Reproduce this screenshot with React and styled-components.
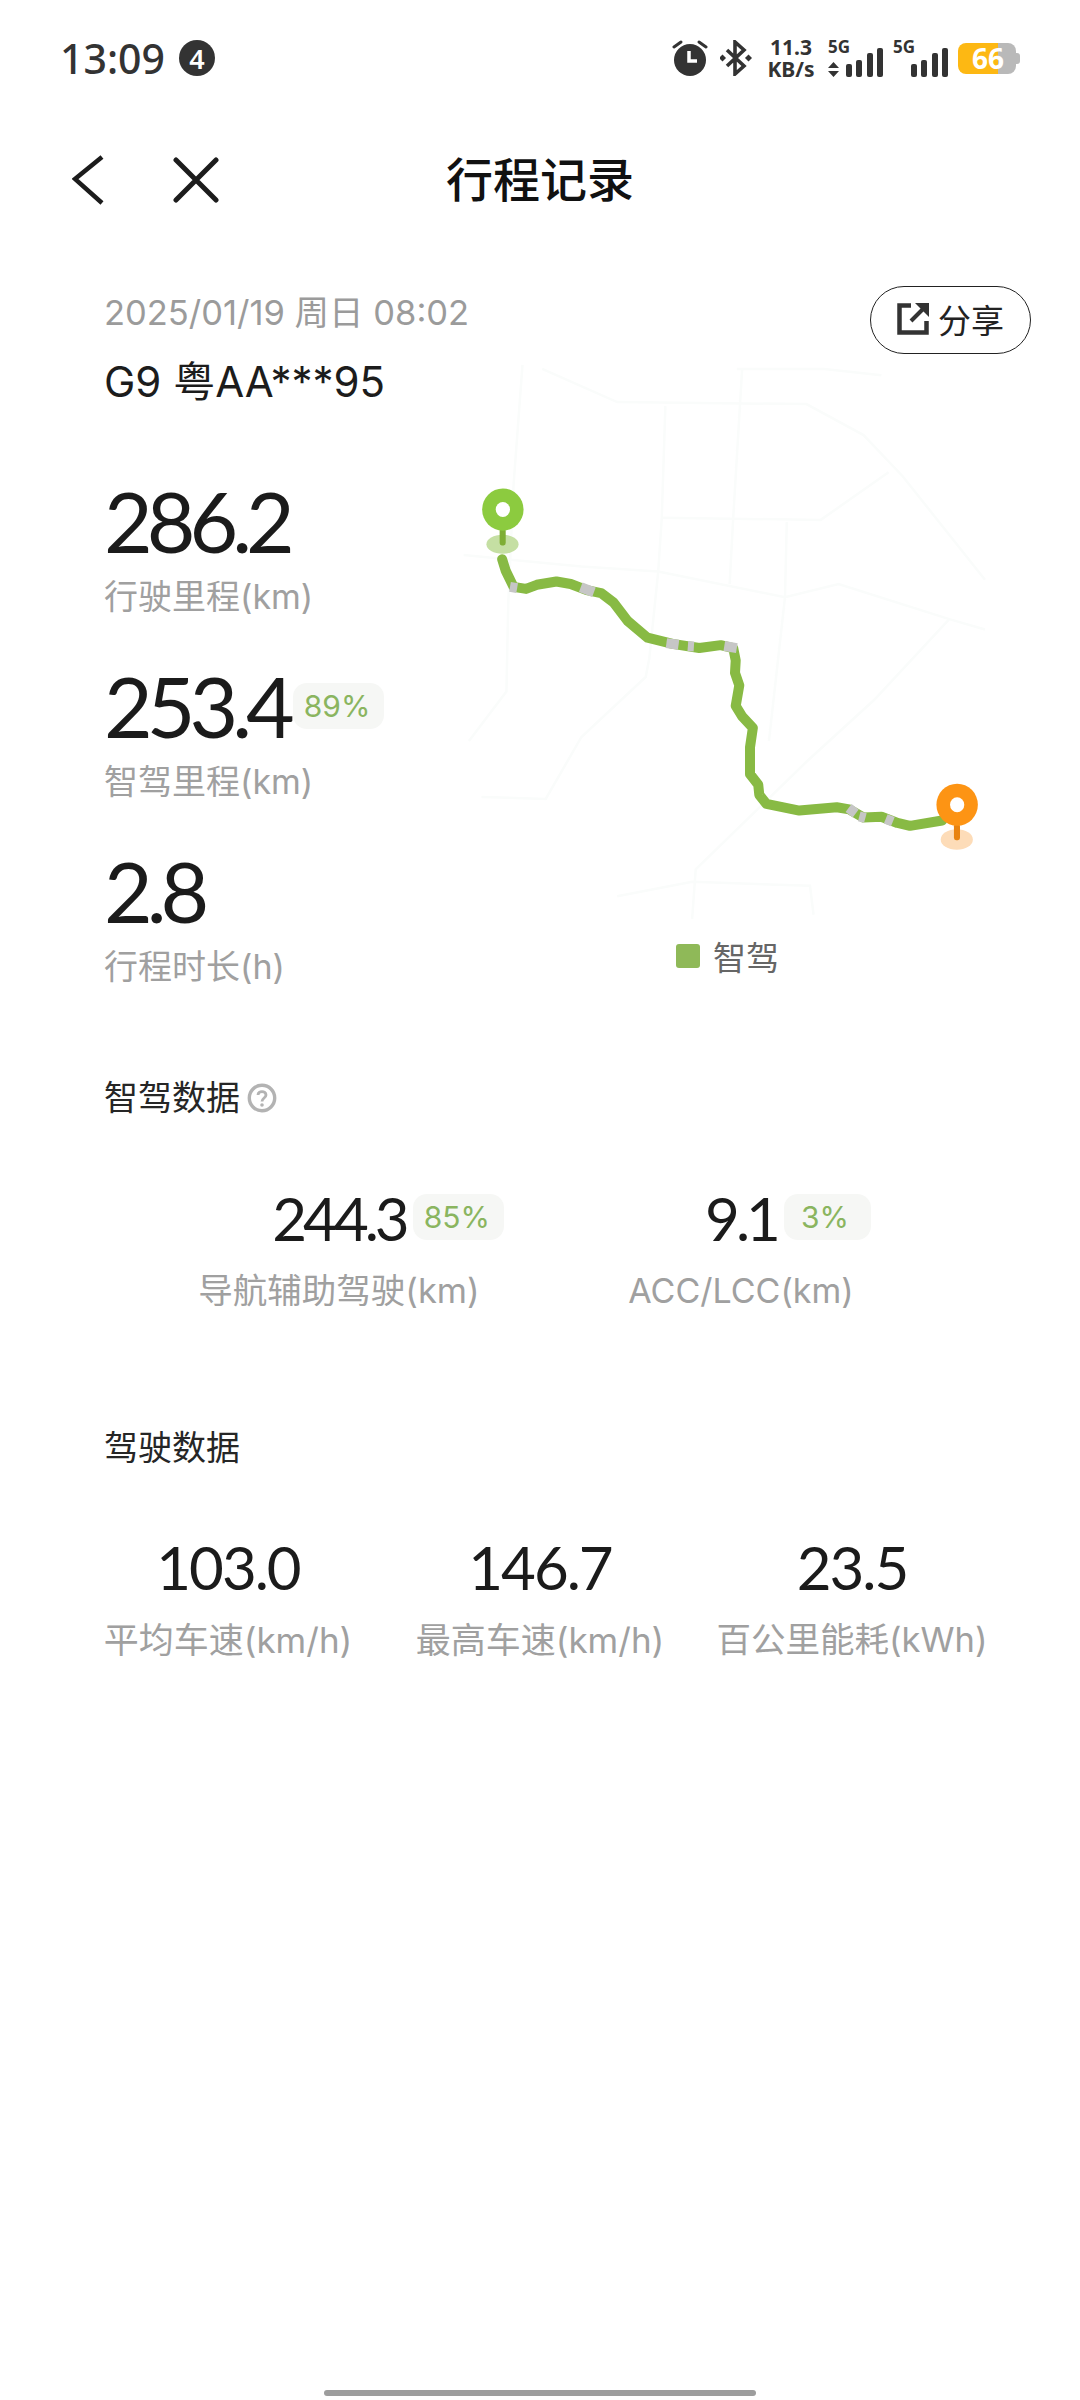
import React from 'react';
import styled, { createGlobalStyle } from 'styled-components';

const GlobalStyle = createGlobalStyle`
    html, body {
        margin: 0;
        padding: 0;
        background: #fff;
    }
    body {
        font-family: "Inter", "Noto Sans CJK SC", sans-serif;
    }
`;

const Page = styled.div`
    width: 1080px;
    height: 2400px;
    display: flex;
    flex-direction: column;
    background: #fff;
    overflow: hidden;
`;

/* status bar */
const StatusBar = styled.div`
    height: 116px;
    display: flex;
    align-items: center;
    justify-content: space-between;
    padding: 0 64px 0 60px;
    box-sizing: border-box;
    color: #333;
`;
const StatusLeft = styled.div`
    display: flex;
    align-items: center;
    gap: 14px;
`;
const Clock = styled.span`
    font-family: "Noto Sans", sans-serif;
    font-size: 41px;
    font-weight: 500;
    line-height: 48px;
`;
const CountBadge = styled.span`
    width: 36px;
    height: 36px;
    border-radius: 50%;
    background: #333;
    color: #fff;
    font-family: "Noto Sans", sans-serif;
    font-size: 27px;
    font-weight: 600;
    display: flex;
    align-items: center;
    justify-content: center;
`;
const StatusRight = styled.div`
    display: flex;
    align-items: center;
`;
const SpeedText = styled.div`
    width: 74px;
    margin-left: 2px;
    font-family: "Noto Sans", sans-serif;
    font-weight: 700;
    font-size: 21px;
    line-height: 22px;
    text-align: center;
    white-space: nowrap;
`;
const Signal = styled.div`
    width: 55px;
    height: 38px;
    margin-left: ${props => props.$gap}px;
    display: flex;
    justify-content: space-between;
    align-items: flex-end;
`;
const SignalSide = styled.div`
    width: 17px;
    height: 38px;
    display: flex;
    flex-direction: column;
    justify-content: space-between;
`;
const FiveG = styled.span`
    font-family: "Noto Sans", sans-serif;
    font-size: 17px;
    font-weight: 700;
    line-height: 16px;
    white-space: nowrap;
`;
const Bars = styled.div`
    display: flex;
    align-items: flex-end;
    gap: 4.5px;
`;
const Bar = styled.i`
    display: block;
    width: 6px;
    height: ${props => props.$h}px;
    border-radius: 2px;
    background: #333;
`;
const Battery = styled.div`
    width: 58px;
    height: 31px;
    margin-left: 10px;
    border-radius: 8px;
    background: linear-gradient(90deg, #fdb813 0 40px, #b9b9b9 40px);
    color: #fff;
    font-family: "Noto Sans", sans-serif;
    font-size: 28px;
    font-weight: 700;
    line-height: 31px;
    padding-left: 14px;
    box-sizing: border-box;
    position: relative;
    &::after {
        content: '';
        position: absolute;
        right: -4px;
        top: 10px;
        width: 4px;
        height: 11px;
        border-radius: 0 3px 3px 0;
        background: #b9b9b9;
    }
`;

/* nav */
const NavBar = styled.div`
    height: 128px;
    display: grid;
    grid-template-columns: 1fr auto 1fr;
    align-items: center;
    padding: 0 72px;
    box-sizing: border-box;
`;
const NavIcons = styled.div`
    display: flex;
    align-items: center;
    gap: 69px;
`;
const NavTitle = styled.div`
    font-size: 47px;
    font-weight: 500;
    color: #111;
    line-height: 60px;
`;

/* trip summary */
const Summary = styled.div`
    display: flex;
    padding: 42px 60px 0 104px;
`;
const SummaryLeft = styled.div`
    width: 356px;
    flex-shrink: 0;
    padding-top: 5px;
`;
const DateText = styled.div`
    font-size: 34.5px;
    line-height: 44px;
    color: #9b9b9b;
    white-space: nowrap;
`;
const Plate = styled.div`
    margin-top: 22px;
    font-size: 42px;
    line-height: 50px;
    color: #1c1c1c;
    white-space: nowrap;
`;
const StatList = styled.div`
    margin-top: 72px;
    display: flex;
    flex-direction: column;
    gap: 45px;
`;
const BigRow = styled.div`
    display: flex;
    align-items: center;
    height: 84px;
    gap: 4px;
`;
const BigValue = styled.span`
    font-family: "Lato", sans-serif;
    font-size: 84px;
    line-height: 84px;
    letter-spacing: -6px;
    color: #1b1b1b;
`;
const Label = styled.div`
    font-size: 34px;
    line-height: 44px;
    color: #a0a0a0;
    white-space: nowrap;
`;
const BigLabel = styled(Label)`
    margin-top: 12px;
`;
const Percent = styled.span`
    height: 46px;
    padding: 0 ${props => props.$right || 14}px 0 ${props => props.$left || 11}px;
    border-radius: 14px;
    background: #f6f7f5;
    color: #8ab55f;
    font-size: 30px;
    line-height: 46px;
    box-sizing: border-box;
    display: inline-block;
    white-space: nowrap;
`;
const SummaryRight = styled.div`
    position: relative;
    width: 560px;
    padding-top: 54px;
`;
const ShareButton = styled.div`
    position: absolute;
    top: 0;
    right: -11px;
    width: 161px;
    height: 68px;
    padding-bottom: 3px;
    border: 1.5px solid #222;
    border-radius: 34px;
    box-sizing: border-box;
    display: flex;
    align-items: center;
    justify-content: center;
    gap: 9px;
    font-size: 33px;
    color: #222;
`;
const MapSvg = styled.svg`
    display: block;
    width: 560px;
    height: 600px;
`;
const Legend = styled.div`
    margin-top: -2px;
    padding-left: 216px;
    display: flex;
    align-items: center;
    gap: 13px;
    height: 36px;
    font-size: 33px;
    color: #666;
`;
const LegendDot = styled.i`
    display: block;
    width: 24px;
    height: 24px;
    border-radius: 3px;
    background: #8fb958;
`;

/* data sections */
const Section = styled.div`
    margin-top: ${props => props.$top}px;
`;
const SectionHead = styled.div`
    display: flex;
    align-items: center;
    gap: 7px;
    padding-left: 104px;
    font-size: 34px;
    line-height: 44px;
    color: #262626;
`;
const SmartGrid = styled.div`
    margin-top: 68px;
    display: grid;
    grid-template-columns: repeat(2, 402px);
    justify-content: center;
`;
const DriveGrid = styled.div`
    margin-top: 67px;
    display: grid;
    grid-template-columns: repeat(3, 312px);
    justify-content: center;
`;
const Cell = styled.div`
    display: flex;
    flex-direction: column;
    align-items: center;
`;
const ValueWrap = styled.div`
    position: relative;
    height: 60px;
    display: flex;
    align-items: center;
`;
const Value = styled.span`
    font-family: "Lato", sans-serif;
    font-size: 60px;
    line-height: 60px;
    letter-spacing: ${props => props.$spacing}px;
    color: #1b1b1b;
`;
const FloatPercent = styled(Percent)`
    position: absolute;
    left: 100%;
    top: 6px;
    margin-left: 7px;
`;
const CellLabel = styled(Label)`
    margin-top: ${props => props.$top}px;
    font-size: ${props => props.$size}px;
`;

const HomeBar = styled.div`
    margin: auto auto 4px;
    width: 432px;
    height: 6px;
    border-radius: 3px;
    background: #9d9d9d;
`;

const AlarmIcon = () => (
    <svg width="36" height="38" viewBox="0 0 36 38">
        <circle cx="18" cy="21" r="16" fill="#333" />
        <path d="M2 8 L9 3 M34 8 L27 3" stroke="#333" strokeWidth="3" strokeLinecap="round" />
        <path d="M17 12 V22 H25" stroke="#fff" strokeWidth="3.5" fill="none" />
    </svg>
);

const BluetoothIcon = () => (
    <svg width="32" height="36" viewBox="0 0 32 36" style={{ marginLeft: 12 }}>
        <path d="M7 10 L24 26 L15 34 V2 L24 10 L7 26" stroke="#333" strokeWidth="3.6" fill="none" />
        <rect x="0" y="15.5" width="5" height="5" transform="rotate(45 2.5 18)" fill="#333" />
        <rect x="26" y="15.5" width="5" height="5" transform="rotate(45 28.5 18)" fill="#333" />
    </svg>
);

const UpDownIcon = () => (
    <svg width="11" height="15" viewBox="0 0 11 15">
        <path d="M5.5 0 L11 6 H0 Z M0 9 H11 L5.5 15 Z" fill="#333" />
    </svg>
);

const BackIcon = () => (
    <svg width="32" height="50" viewBox="0 0 32 50">
        <path d="M30 2 L3 24 L30 48" stroke="#1c1c1c" strokeWidth="4.5" fill="none" />
    </svg>
);

const CloseIcon = () => (
    <svg width="46" height="46" viewBox="0 0 46 46">
        <path d="M3 3 L43 43 M43 3 L3 43" stroke="#1c1c1c" strokeWidth="5" strokeLinecap="round" />
    </svg>
);

const ShareIcon = () => (
    <svg width="32" height="32" viewBox="0 0 32 32">
        <path d="M14 2.5 H2.5 V29.5 H29.5 V18" stroke="#333" strokeWidth="4.5" fill="none" />
        <path d="M14 18 L26 6" stroke="#333" strokeWidth="4" fill="none" />
        <path d="M18 0 H32 V14 Z" fill="#333" />
    </svg>
);

const HelpIcon = () => (
    <svg width="30" height="30" viewBox="0 0 30 30">
        <circle cx="15" cy="15" r="12.7" stroke="#b3b3b3" strokeWidth="3.4" fill="none" />
        <path d="M11 12 C11 7.5 19 7.5 19 12 C19 15 15 15 15 18.5" stroke="#b3b3b3" strokeWidth="2.8" fill="none" />
        <circle cx="15" cy="22" r="1.8" fill="#b3b3b3" />
    </svg>
);

const gridLines = [
    '175,60 150,350 135,640 130,850 25,970',
    '230,70 440,150 970,155 1130,230 1240,330 1470,580',
    '790,70 765,430 755,590',
    '775,70 1020,70 1180,85',
    '575,160 565,430 555,560 530,770 520,815 340,960 240,1110 60,1105',
    '565,430 1010,435 1200,320',
    '10,520 340,548 555,560 910,622 1060,590 1370,675 1470,700',
    '915,440 910,622 865,970',
    '1370,675 1160,870 970,1020 660,1280 650,1400',
    '440,1345 650,1310 980,1320 990,1390',
];

const routePoints = '118,530 128,558 150,597 185,602 215,592 270,584 310,590 355,605 395,612 430,635 470,680 525,720 595,735 670,745 730,738 765,745 772,775 770,805 782,835 772,885 790,910 820,938 812,985 812,1050 835,1075 838,1100 858,1122 950,1138 1055,1130 1090,1135 1130,1155 1180,1153 1225,1168 1260,1175 1350,1162';

const graySegments = [
    '140,597 160,600',
    '338,598 375,610',
    '578,733 612,737',
    '638,740 655,741',
    '740,740 775,745',
    '1088,1132 1108,1145',
    '1118,1152 1135,1156',
    '1192,1158 1212,1165',
];

const RouteMap = () => (
    <MapSvg viewBox="0 0 1568 1451" preserveAspectRatio="none">
        {gridLines.map(points => (
            <polyline key={points} points={points} fill="none" stroke="#fafcfb" strokeWidth="2.5" vectorEffect="non-scaling-stroke" />
        ))}
        <polyline points={routePoints} fill="none" stroke="#88ba44" strokeWidth="10" strokeLinejoin="round" strokeLinecap="round" vectorEffect="non-scaling-stroke" />
        {graySegments.map(points => (
            <polyline key={points} points={points} fill="none" stroke="#c6c6c6" strokeWidth="10" vectorEffect="non-scaling-stroke" />
        ))}
        <ellipse cx="119" cy="494" rx="45" ry="23" fill="#c5dfa3" />
        <rect x="111" y="455" width="17" height="42" rx="6" fill="#7fae34" />
        <ellipse cx="120" cy="410" rx="58" ry="51" fill="#8ccb3f" />
        <ellipse cx="120" cy="410" rx="20" ry="18" fill="#fff" />
        <ellipse cx="1391" cy="1208" rx="45" ry="25" fill="#fddcb8" />
        <rect x="1383" y="1170" width="17" height="40" rx="6" fill="#e88310" />
        <ellipse cx="1392" cy="1124" rx="58" ry="51" fill="#fd9414" />
        <ellipse cx="1392" cy="1124" rx="20" ry="18" fill="#fff" />
    </MapSvg>
);

const SignalGroup = ({ gap, arrows }) => (
    <Signal $gap={gap}>
        <SignalSide>
            <FiveG>5G</FiveG>
            {arrows && <UpDownIcon />}
        </SignalSide>
        <Bars>
            <Bar $h={13} />
            <Bar $h={17} />
            <Bar $h={24} />
            <Bar $h={29} />
        </Bars>
    </Signal>
);

const App = () => {
    return (
        <Page>
            <GlobalStyle />
            <StatusBar>
                <StatusLeft>
                    <Clock>13:09</Clock>
                    <CountBadge>4</CountBadge>
                </StatusLeft>
                <StatusRight>
                    <AlarmIcon />
                    <BluetoothIcon />
                    <SpeedText>11.3<br />KB/s</SpeedText>
                    <SignalGroup gap={0} arrows />
                    <SignalGroup gap={10} />
                    <Battery>66</Battery>
                </StatusRight>
            </StatusBar>

            <NavBar>
                <NavIcons>
                    <BackIcon />
                    <CloseIcon />
                </NavIcons>
                <NavTitle>行程记录</NavTitle>
            </NavBar>

            <Summary>
                <SummaryLeft>
                    <DateText>2025/01/19 周日 08:02</DateText>
                    <Plate>G9 粤AA***95</Plate>
                    <StatList>
                        <div>
                            <BigRow><BigValue>286.2</BigValue></BigRow>
                            <BigLabel>行驶里程(km)</BigLabel>
                        </div>
                        <div>
                            <BigRow><BigValue>253.4</BigValue><Percent>89%</Percent></BigRow>
                            <BigLabel>智驾里程(km)</BigLabel>
                        </div>
                        <div>
                            <BigRow><BigValue>2.8</BigValue></BigRow>
                            <BigLabel>行程时长(h)</BigLabel>
                        </div>
                    </StatList>
                </SummaryLeft>
                <SummaryRight>
                    <ShareButton><ShareIcon />分享</ShareButton>
                    <RouteMap />
                    <Legend><LegendDot />智驾</Legend>
                </SummaryRight>
            </Summary>

            <Section $top={87}>
                <SectionHead>智驾数据<HelpIcon /></SectionHead>
                <SmartGrid>
                    <Cell>
                        <ValueWrap>
                            <Value $spacing={-4}>244.3</Value>
                            <FloatPercent>85%</FloatPercent>
                        </ValueWrap>
                        <CellLabel $top={21} $size={34.5}>导航辅助驾驶(km)</CellLabel>
                    </Cell>
                    <Cell>
                        <ValueWrap>
                            <Value $spacing={-4}>9.1</Value>
                            <FloatPercent $left={17} $right={22}>3%</FloatPercent>
                        </ValueWrap>
                        <CellLabel $top={21} $size={34}>ACC/LCC(km)</CellLabel>
                    </Cell>
                </SmartGrid>
            </Section>

            <Section $top={113}>
                <SectionHead>驾驶数据</SectionHead>
                <DriveGrid>
                    <Cell>
                        <Value $spacing={-2}>103.0</Value>
                        <CellLabel $top={21} $size={35}>平均车速(km/h)</CellLabel>
                    </Cell>
                    <Cell>
                        <Value $spacing={-2}>146.7</Value>
                        <CellLabel $top={21} $size={35}>最高车速(km/h)</CellLabel>
                    </Cell>
                    <Cell>
                        <Value $spacing={-2}>23.5</Value>
                        <CellLabel $top={21} $size={34.5}>百公里能耗(kWh)</CellLabel>
                    </Cell>
                </DriveGrid>
            </Section>

            <HomeBar />
        </Page>
    );
};

export default App;
